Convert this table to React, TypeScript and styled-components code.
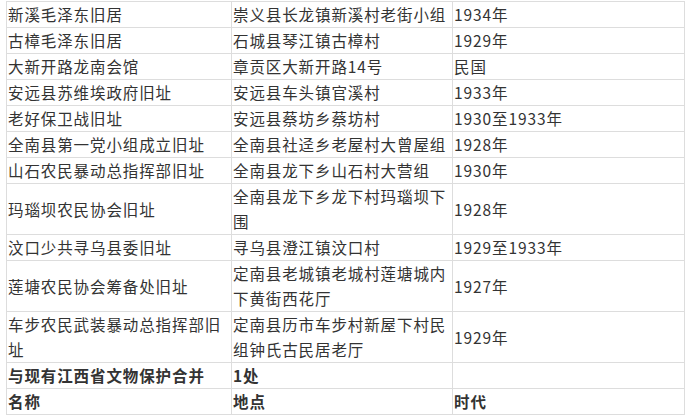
import styled, { createGlobalStyle } from 'styled-components'

const GlobalStyle = createGlobalStyle`
  body {
    margin: 0;
    background: #ffffff;
  }
`

const Page = styled.div`
  padding: 1px 0 0 6px;
`

const Table = styled.table`
  width: 678px;
  border-collapse: collapse;
  table-layout: fixed;
  font-family: 'Noto Sans CJK SC', 'Microsoft YaHei', sans-serif;
  font-size: 15.5px;
  color: #333333;
`

const Cell = styled.td<{ $bold?: boolean }>`
  border: 1px solid #dddddd;
  padding: 0 0 0 1px;
  line-height: 25px;
  letter-spacing: 0.9px;
  vertical-align: middle;
  word-break: break-all;
  font-weight: ${({ $bold }) => ($bold ? 700 : 400)};
`

interface Site {
  name: string
  place: string
  era: string
}

const sites: Site[] = [
  { name: '新溪毛泽东旧居', place: '崇义县长龙镇新溪村老街小组', era: '1934年' },
  { name: '古樟毛泽东旧居', place: '石城县琴江镇古樟村', era: '1929年' },
  { name: '大新开路龙南会馆', place: '章贡区大新开路14号', era: '民国' },
  { name: '安远县苏维埃政府旧址', place: '安远县车头镇官溪村', era: '1933年' },
  { name: '老好保卫战旧址', place: '安远县蔡坊乡蔡坊村', era: '1930至1933年' },
  { name: '全南县第一党小组成立旧址', place: '全南县社迳乡老屋村大曾屋组', era: '1928年' },
  { name: '山石农民暴动总指挥部旧址', place: '全南县龙下乡山石村大营组', era: '1930年' },
  { name: '玛瑙坝农民协会旧址', place: '全南县龙下乡龙下村玛瑙坝下围', era: '1928年' },
  { name: '汶口少共寻乌县委旧址', place: '寻乌县澄江镇汶口村', era: '1929至1933年' },
  { name: '莲塘农民协会筹备处旧址', place: '定南县老城镇老城村莲塘城内下黄街西花厅', era: '1927年' },
  { name: '车步农民武装暴动总指挥部旧址', place: '定南县历市车步村新屋下村民组钟氏古民居老厅', era: '1929年' },
]

export default function App() {
  return (
    <>
      <GlobalStyle />
      <Page>
        <Table>
          <colgroup>
            <col style={{ width: 225 }} />
            <col style={{ width: 221 }} />
            <col style={{ width: 232 }} />
          </colgroup>
          <tbody>
            {sites.map((s) => (
              <tr key={s.name}>
                <Cell>{s.name}</Cell>
                <Cell>{s.place}</Cell>
                <Cell>{s.era}</Cell>
              </tr>
            ))}
            <tr>
              <Cell $bold>与现有江西省文物保护合并</Cell>
              <Cell $bold>1处</Cell>
              <Cell />
            </tr>
            <tr>
              <Cell $bold>名称</Cell>
              <Cell $bold>地点</Cell>
              <Cell $bold>时代</Cell>
            </tr>
          </tbody>
        </Table>
      </Page>
    </>
  )
}
